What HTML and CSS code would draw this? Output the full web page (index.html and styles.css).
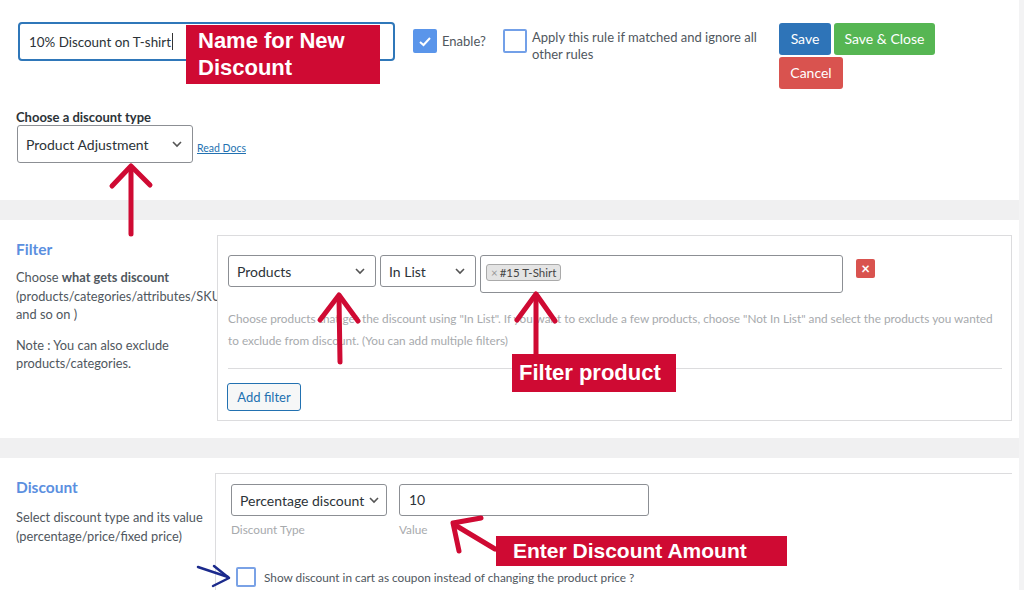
FILE: index.html
```html
<!DOCTYPE html>
<html>
<head>
<meta charset="utf-8">
<link rel="stylesheet" href="styles.css">
</head>
<body>
<div class="page">
  <section class="general">
    <div class="row1">
      <div class="name-input">10% Discount on T-shirt<span class="caret"></span></div>
      <div class="check-group enable">
        <span class="cb checked"><svg width="14" height="11" viewBox="0 0 14 11"><polyline points="2,6 5.5,9 12,2" fill="none" stroke="#fff" stroke-width="2"/></svg></span>
        <span class="cb-label">Enable?</span>
      </div>
      <div class="check-group apply">
        <span class="cb"></span>
        <span class="cb-label multi">Apply this rule if matched and ignore all other rules</span>
      </div>
      <div class="buttons">
        <div class="btn-row">
          <span class="btn btn-blue">Save</span>
          <span class="btn btn-green">Save &amp; Close</span>
        </div>
        <div class="btn-row">
          <span class="btn btn-red">Cancel</span>
        </div>
      </div>
    </div>
    <div class="type-block">
      <div class="type-label">Choose a discount type</div>
      <div class="type-row">
        <div class="select sel-type">Product Adjustment<svg class="chev" width="12" height="8" viewBox="0 0 12 8"><polyline points="2,2 6,6 10,2" fill="none" stroke="#555" stroke-width="1.6"/></svg></div>
        <a class="read-docs">Read Docs</a>
      </div>
    </div>
  </section>

  <div class="band"></div>

  <section class="block filter-block">
    <div class="side">
      <h3 class="side-title">Filter</h3>
      <p class="side-text">Choose <b>what gets discount</b><br>(products/categories/attributes/SKU<br>and so on )</p>
      <p class="side-text">Note : You can also exclude<br>products/categories.</p>
    </div>
    <div class="panel filter-panel">
      <div class="filter-row">
        <div class="select sel-products">Products<svg class="chev" width="12" height="8" viewBox="0 0 12 8"><polyline points="2,2 6,6 10,2" fill="none" stroke="#555" stroke-width="1.6"/></svg></div>
        <div class="select sel-inlist">In List<svg class="chev" width="12" height="8" viewBox="0 0 12 8"><polyline points="2,2 6,6 10,2" fill="none" stroke="#555" stroke-width="1.6"/></svg></div>
        <div class="multi-select"><span class="tag"><span class="tag-x">×</span>#15 T-Shirt</span></div>
        <span class="remove">×</span>
      </div>
      <p class="help">Choose products that get the discount using "In List". If you want to exclude a few products, choose "Not In List" and select the products you wanted<br>to exclude from discount. (You can add multiple filters)</p>
      <hr class="sep">
      <span class="add-filter">Add filter</span>
    </div>
  </section>

  <div class="band"></div>

  <section class="block discount-block">
    <div class="side">
      <h3 class="side-title">Discount</h3>
      <p class="side-text">Select discount type and its value<br>(percentage/price/fixed price)</p>
    </div>
    <div class="panel discount-panel">
      <div class="disc-row">
        <div class="field">
          <div class="select sel-pct">Percentage discount<svg class="chev" width="12" height="8" viewBox="0 0 12 8"><polyline points="2,2 6,6 10,2" fill="none" stroke="#555" stroke-width="1.6"/></svg></div>
          <span class="field-label">Discount Type</span>
        </div>
        <div class="field">
          <div class="value-input">10</div>
          <span class="field-label">Value</span>
        </div>
      </div>
      <div class="coupon-row">
        <span class="cb small"></span>
        <span class="coupon-text">Show discount in cart as coupon instead of changing the product price ?</span>
      </div>
    </div>
  </section>

  <div class="note note-name">Name for New<br>Discount</div>
  <div class="note note-filter">Filter product</div>
  <div class="note note-amount">Enter Discount Amount</div>

  <svg class="arrows" width="1024" height="590" viewBox="0 0 1024 590">
    <g fill="none" stroke="#cf0a33" stroke-width="5" stroke-linecap="round" stroke-linejoin="round">
      <line x1="131" y1="234" x2="131" y2="168"/>
      <polyline points="112,186 131,166 150,185"/>
      <line x1="340" y1="362" x2="339" y2="297"/>
      <polyline points="320,320 339,295 358,321"/>
      <line x1="536" y1="354" x2="536" y2="296"/>
      <polyline points="517,320 536,294 555,321"/>
      <line x1="495" y1="549" x2="455" y2="525"/>
      <polyline points="481,518 453,523 459,551"/>
    </g>
    <g fill="none" stroke="#1b2a8c" stroke-width="2.5" stroke-linecap="round" stroke-linejoin="round">
      <line x1="198" y1="567" x2="228" y2="577"/>
      <polyline points="214,566 229,578 213,586"/>
    </g>
  </svg>
  <div class="scrollbar"></div>
</div>
</body>
</html>
```

FILE: styles.css
```css
html, body {
  margin: 0;
  padding: 0;
  background: #fff;
}
body {
  font-family: Lato, "Open Sans", sans-serif;
  color: #3c434a;
  width: 1024px;
  height: 590px;
  overflow: hidden;
}
.page {
  position: relative;
  width: 1024px;
  height: 590px;
  overflow: hidden;
}
.scrollbar {
  position: absolute;
  top: 0;
  right: 0;
  width: 5px;
  height: 590px;
  background: #f3f3f4;
}

/* general */
.general {
  height: 200px;
  box-sizing: border-box;
  padding: 22px 0 0 16px;
}
.row1 {
  display: flex;
  align-items: flex-start;
}
.name-input {
  margin-left: 2px;
  width: 377px;
  height: 39px;
  box-sizing: border-box;
  border: 2px solid #2f77b9;
  border-radius: 4px;
  padding: 0 0 0 9px;
  display: flex;
  align-items: center;
  font-size: 13.4px;
  color: #2c3338;
}
.caret {
  display: inline-block;
  width: 1px;
  height: 17px;
  background: #333;
  margin-left: 1px;
}
.check-group {
  display: flex;
  align-items: flex-start;
}
.enable {
  margin-left: 18px;
  margin-top: 7px;
  width: 90px;
}
.apply {
  margin-top: 7px;
}
.cb {
  width: 24px;
  height: 24px;
  box-sizing: border-box;
  border: 2px solid #73a0e8;
  border-radius: 2px;
  background: #fff;
  display: flex;
  align-items: center;
  justify-content: center;
  flex: none;
}
.cb.checked {
  background: #5a95ea;
  border-color: #5a95ea;
}
.cb-label {
  font-size: 13px;
  color: #50575e;
  margin-left: 5px;
  line-height: 24px;
  white-space: nowrap;
}
.cb-label.multi {
  width: 240px;
  line-height: 17px;
  margin-top: 0;
  white-space: normal;
}
.buttons {
  margin-left: 7px;
  margin-top: 1px;
  display: flex;
  flex-direction: column;
  gap: 2px;
}
.btn-row {
  display: flex;
  gap: 3px;
}
.btn {
  height: 32px;
  line-height: 32px;
  border-radius: 3px;
  color: #fff;
  font-size: 14px;
  box-sizing: border-box;
  text-align: center;
  white-space: nowrap;
}
.btn-blue { background: #2e74b8; width: 52px; }
.btn-green { background: #56b653; width: 101px; }
.btn-red { background: #d9534f; width: 64px; }

.type-block {
  margin-top: 22px;
}
.type-label {
  font-size: 13px;
  font-weight: 700;
  color: #2c3338;
  line-height: 12px;
}
.type-row {
  display: flex;
  align-items: center;
  margin-top: 2px;
}
.select {
  box-sizing: border-box;
  border: 1px solid #8c8f94;
  border-radius: 3px;
  background: #fff;
  display: flex;
  align-items: center;
  justify-content: space-between;
  padding: 0 9px 0 8px;
  font-size: 14px;
  color: #2c3338;
  white-space: nowrap;
}
.chev { flex: none; }
.sel-type {
  margin-left: 1px;
  width: 176px;
  height: 38px;
}
.read-docs {
  margin-left: 4px;
  margin-top: 7px;
  font-size: 10.5px;
  color: #2271b1;
  text-decoration: underline;
}

.band {
  height: 20px;
  background: #f0f0f1;
}

/* blocks */
.block {
  display: flex;
  box-sizing: border-box;
}
.filter-block {
  height: 218px;
  padding-top: 15px;
}
.discount-block {
  height: 132px;
  padding-top: 15px;
}
.side {
  width: 217px;
  flex: none;
  padding-left: 16px;
  box-sizing: border-box;
  overflow: hidden;
  white-space: nowrap;
}
.discount-block .side { width: 215px; }
.side-title {
  margin: 4px 0 0;
  font-size: 15.5px;
  font-weight: 700;
  color: #5b8fdf;
  line-height: 20px;
}
.side-text {
  margin: 9px 0 0;
  font-size: 12.8px;
  line-height: 18.5px;
  color: #50575e;
}
.filter-block .side-text + .side-text { margin-top: 12px; }
.discount-block .side-text { margin-top: 11px; }

.panel {
  border: 1px solid #dcdcde;
  background: #fff;
  box-sizing: border-box;
}
.filter-panel {
  width: 795px;
  height: 186px;
  padding: 19px 10px 0 10px;
}
.filter-row {
  display: flex;
  align-items: flex-start;
  gap: 4px;
}
.sel-products { width: 148px; height: 32px; }
.sel-inlist { width: 96px; height: 32px; }
.multi-select {
  width: 363px;
  height: 38px;
  box-sizing: border-box;
  border: 1px solid #8c8f94;
  border-radius: 3px;
  padding: 5px 5px;
}
.tag {
  display: inline-block;
  background: #e4e4e4;
  border: 1px solid #aaa;
  border-radius: 3px;
  font-size: 11.5px;
  line-height: 15px;
  padding: 0 4px 0 4px;
  color: #444;
}
.tag-x {
  color: #999;
  margin-right: 2px;
}
.remove {
  margin-left: 9px;
  margin-top: 4px;
  width: 19px;
  height: 19px;
  background: #d9534f;
  border-radius: 2px;
  color: #fff;
  font-weight: 700;
  font-size: 15px;
  line-height: 18px;
  text-align: center;
}
.help {
  margin: 15px 0 0;
  font-size: 11.8px;
  line-height: 22px;
  color: #a7aaad;
  white-space: nowrap;
}
.sep {
  border: 0;
  border-top: 1px solid #dcdcde;
  margin: 16px 0 0;
  width: 774px;
}
.add-filter {
  display: inline-block;
  margin-top: 14px;
  margin-left: -1px;
  width: 74px;
  height: 28px;
  box-sizing: border-box;
  border: 1px solid #2271b1;
  border-radius: 3px;
  background: #f6f7f7;
  color: #2271b1;
  font-size: 13px;
  line-height: 26px;
  text-align: center;
}

.discount-panel {
  width: 797px;
  height: 140px;
  padding: 10px 15px 0 15px;
  border-right: 0;
}
.disc-row {
  display: flex;
  gap: 12px;
}
.field {
  display: flex;
  flex-direction: column;
}
.sel-pct {
  width: 156px;
  height: 32px;
  padding-right: 6px;
}
.value-input {
  width: 250px;
  height: 32px;
  box-sizing: border-box;
  border: 1px solid #8c8f94;
  border-radius: 3px;
  font-size: 14px;
  line-height: 30px;
  padding-left: 9px;
  color: #2c3338;
}
.field-label {
  margin-top: 7px;
  font-size: 11.8px;
  color: #a7aaad;
  line-height: 14px;
}
.coupon-row {
  display: flex;
  align-items: center;
  margin-top: 30px;
  margin-left: 5px;
}
.cb.small {
  width: 20px;
  height: 20px;
  border-color: #7aa2e6;
}
.coupon-text {
  margin-left: 8px;
  font-size: 11.8px;
  color: #50575e;
}

/* annotation overlays */
.note {
  position: absolute;
  background: #cf0a33;
  color: #fff;
  font-family: "Liberation Sans", Arial, sans-serif;
  font-weight: 700;
  box-sizing: border-box;
}
.note-name {
  left: 186px;
  top: 25px;
  width: 194px;
  height: 59px;
  font-size: 22px;
  line-height: 27px;
  padding: 2px 0 0 12px;
}
.note-filter {
  left: 512px;
  top: 354px;
  width: 164px;
  height: 38px;
  font-size: 22px;
  line-height: 38px;
  padding-left: 7px;
}
.note-amount {
  left: 496px;
  top: 536px;
  width: 291px;
  height: 30px;
  font-size: 21px;
  line-height: 30px;
  padding-left: 17px;
}
.arrows {
  position: absolute;
  left: 0;
  top: 0;
  pointer-events: none;
}
```
